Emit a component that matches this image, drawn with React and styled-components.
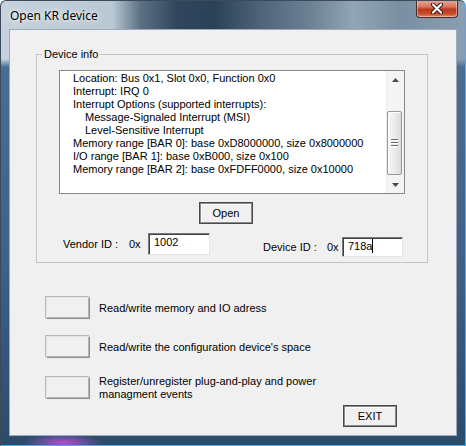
import React from "react";
import styled, { createGlobalStyle } from "styled-components";

const GlobalStyle = createGlobalStyle`
    html, body {
        margin: 0;
        padding: 0;
        background: #ffffff;
    }
    body {
        font-family: "Liberation Sans", Arial, sans-serif;
        font-size: 11px;
        color: #000;
    }
`;

const deviceLines = [
    { text: "Location: Bus 0x1, Slot 0x0, Function 0x0" },
    { text: "Interrupt: IRQ 0" },
    { text: "Interrupt Options (supported interrupts):" },
    { text: "Message-Signaled Interrupt (MSI)", indent: true },
    { text: "Level-Sensitive Interrupt", indent: true },
    { text: "Memory range [BAR 0]: base 0xD8000000, size 0x8000000" },
    { text: "I/O range [BAR 1]: base 0xB000, size 0x100" },
    { text: "Memory range [BAR 2]: base 0xFDFF0000, size 0x10000" },
];

const actions = [
    "Read/write memory and IO adress",
    "Read/write the configuration device's space",
    "Register/unregister plug-and-play and power\nmanagment events",
];

const App = () => {
    return (
        <>
            <GlobalStyle />
            <Window>
                <TitleBar>
                    <Title>Open KR device</Title>
                    <CloseButton>
                        <svg width="16" height="11" viewBox="0 0 16 11">
                            <path
                                d="M4 1.5 L12 9.5 M12 1.5 L4 9.5"
                                stroke="#3a1010"
                                strokeWidth="4"
                                strokeLinecap="round"
                            />
                            <path
                                d="M4 1.5 L12 9.5 M12 1.5 L4 9.5"
                                stroke="#ffffff"
                                strokeWidth="2.2"
                                strokeLinecap="round"
                            />
                        </svg>
                    </CloseButton>
                </TitleBar>
                <Client>
                    <GroupBox>
                        <Legend>Device info</Legend>
                        <ListBox>
                            <ListLines>
                                {deviceLines.map((line, i) => (
                                    <ListLine key={i} $indent={line.indent}>
                                        {line.text}
                                    </ListLine>
                                ))}
                            </ListLines>
                            <ScrollBar>
                                <ArrowBox>
                                    <svg width="7" height="4" viewBox="0 0 7 4">
                                        <path d="M3.5 0 L7 4 L0 4 Z" fill="#4a4a4a" />
                                    </svg>
                                </ArrowBox>
                                <Track>
                                    <Thumb>
                                        <Grip />
                                        <Grip />
                                        <Grip />
                                    </Thumb>
                                </Track>
                                <ArrowBox>
                                    <svg width="7" height="4" viewBox="0 0 7 4">
                                        <path d="M0 0 L7 0 L3.5 4 Z" fill="#4a4a4a" />
                                    </svg>
                                </ArrowBox>
                            </ScrollBar>
                        </ListBox>
                        <DefaultButton $left={140} $top={8}>Open</DefaultButton>
                        <IdRow>
                            <IdField>
                                <FieldLabel $width={66}>Vendor ID :</FieldLabel>
                                <FieldLabel $width={19}>0x</FieldLabel>
                                <EditBox $width={62} $height={22}>1002</EditBox>
                            </IdField>
                            <IdField $offset={4}>
                                <FieldLabel $width={64}>Device ID :</FieldLabel>
                                <FieldLabel $width={15}>0x</FieldLabel>
                                <EditBox $width={61} $height={20}>
                                    718a<Caret />
                                </EditBox>
                            </IdField>
                        </IdRow>
                    </GroupBox>
                    <ActionList>
                        {actions.map((label, i) => (
                            <ActionRow key={i}>
                                <PlainButton />
                                <ActionText>{label}</ActionText>
                            </ActionRow>
                        ))}
                    </ActionList>
                    <DefaultButton $left={333} $top={4}>EXIT</DefaultButton>
                </Client>
            </Window>
        </>
    );
};

const Window = styled.div`
    width: 466px;
    height: 446px;
    box-sizing: border-box;
    border: 1px solid #3b4b5c;
    border-right-color: #3ab8e8;
    border-bottom-color: #3ab8e8;
    border-radius: 6px 6px 0 0;
    display: flex;
    flex-direction: column;
    overflow: hidden;
    background:
        radial-gradient(ellipse 40px 10px at 62px 442px, rgba(170, 90, 220, 0.9), rgba(170, 90, 220, 0) 100%),
        linear-gradient(to bottom, rgba(70, 104, 140, 0) 0px, rgba(70, 104, 140, 0) 58px, #4a6d92 66px, #40628a 250px, #2c4c6c 440px),
        linear-gradient(90deg, #c6d2dd 0%, #bac8d4 24%, #5c7184 30%, #30465c 38%, #2a4157 46%, #4f6478 56%, #6a7f92 66%, #92a5b4 76%, #7990a2 86%, #8aa0b2 100%);
`;

const TitleBar = styled.div`
    height: 28px;
    flex: none;
    display: flex;
    align-items: flex-start;
    justify-content: space-between;
    padding-left: 9px;
`;

const Title = styled.div`
    margin-top: 7px;
    font-family: "Noto Sans", "Open Sans", sans-serif;
    font-size: 12px;
    line-height: 15px;
    color: #000;
    text-shadow: 0 0 6px rgba(255, 255, 255, 0.9), 0 0 3px rgba(255, 255, 255, 0.8);
`;

const CloseButton = styled.div`
    width: 42px;
    height: 18px;
    margin-top: -1px;
    margin-right: 7px;
    box-sizing: border-box;
    border: 1px solid #4a2a2a;
    border-top: none;
    border-radius: 0 0 4px 4px;
    background: linear-gradient(to bottom, #e8a89a 0%, #d6755f 40%, #b8381c 55%, #c84a2c 80%, #e08a60 100%);
    box-shadow: inset 0 0 0 1px rgba(255, 220, 210, 0.5);
    display: flex;
    align-items: center;
    justify-content: center;
`;

const Client = styled.div`
    flex: 1;
    margin: 0 8px 9px 8px;
    border: 1px solid #9aaabb;
    background: #f0f0f0;
    display: flex;
    flex-direction: column;
    align-items: flex-start;
`;

const GroupBox = styled.div`
    position: relative;
    box-sizing: border-box;
    width: 392px;
    height: 209px;
    margin: 24px 0 0 26px;
    padding: 15px 0 0 22px;
    border: 1px solid #c4c4c4;
    display: flex;
    flex-direction: column;
    align-items: flex-start;
`;

const Legend = styled.span`
    position: absolute;
    top: -8px;
    left: 5px;
    padding: 0 2px;
    background: #f0f0f0;
    font-size: 11px;
    line-height: 14px;
`;

const ListBox = styled.div`
    box-sizing: border-box;
    width: 346px;
    height: 124px;
    border: 1px solid #828790;
    background: #fff;
    display: flex;
`;

const ListLines = styled.div`
    flex: 1;
    padding: 1px 0 0 13px;
`;

const ListLine = styled.div`
    line-height: 13px;
    white-space: nowrap;
    padding-left: ${(p) => (p.$indent ? "12px" : "0")};
`;

const ScrollBar = styled.div`
    width: 17px;
    display: flex;
    flex-direction: column;
    background: #f4f4f4;
    border-left: 1px solid #ececec;
`;

const ArrowBox = styled.div`
    height: 17px;
    flex: none;
    display: flex;
    align-items: center;
    justify-content: center;
`;

const Track = styled.div`
    flex: 1;
    padding-top: 23px;
`;

const Thumb = styled.div`
    box-sizing: border-box;
    width: 15px;
    height: 64px;
    margin-left: 0;
    border: 1px solid #979797;
    border-radius: 2px;
    background: linear-gradient(90deg, #f6f6f6 0%, #ececec 50%, #dcdcdc 100%);
    box-shadow: inset 1px 1px 0 #ffffff;
    display: flex;
    flex-direction: column;
    align-items: center;
    justify-content: center;
    gap: 1px;
`;

const Grip = styled.div`
    width: 7px;
    height: 1px;
    background: #6a6a6a;
    border-bottom: 1px solid #ffffff;
`;

const DefaultButton = styled.div`
    box-sizing: border-box;
    width: 54px;
    height: 22px;
    margin-left: ${(p) => p.$left}px;
    margin-top: ${(p) => p.$top}px;
    border: 1px solid #4a4a4a;
    box-shadow: inset 0 0 0 1px #8a8a8a, inset 2px 2px 0 #ffffff;
    background: #f0f0f0;
    display: flex;
    align-items: center;
    justify-content: center;
    font-size: 11px;
`;

const IdRow = styled.div`
    display: flex;
    align-items: flex-start;
    gap: 53px;
    margin: 9px 0 0 4px;
`;

const IdField = styled.div`
    display: flex;
    align-items: center;
    margin-top: ${(p) => p.$offset || 0}px;
`;

const FieldLabel = styled.span`
    width: ${(p) => p.$width}px;
    white-space: nowrap;
    line-height: 13px;
`;

const EditBox = styled.div`
    box-sizing: border-box;
    width: ${(p) => p.$width}px;
    height: ${(p) => p.$height}px;
    padding: 2px 5px 0 5px;
    line-height: 13px;
    background: #fff;
    border-style: solid;
    border-width: 1px;
    border-color: #7a7a7a #e6e6e6 #e6e6e6 #7a7a7a;
    box-shadow: inset 1px 1px 0 #404040;
    display: flex;
    align-items: flex-start;
`;

const Caret = styled.span`
    display: inline-block;
    width: 1px;
    height: 14px;
    margin-top: -1px;
    background: #000;
`;

const ActionList = styled.div`
    display: flex;
    flex-direction: column;
    gap: 17px;
    margin: 34px 0 0 36px;
`;

const ActionRow = styled.div`
    display: flex;
    align-items: center;
    gap: 9px;
    min-height: 22px;
`;

const PlainButton = styled.div`
    box-sizing: border-box;
    width: 44px;
    height: 22px;
    flex: none;
    background: #f0f0f0;
    border-style: solid;
    border-width: 1px;
    border-color: #e4e4e4 #8e8e8e #8e8e8e #e4e4e4;
    box-shadow: inset -1px -1px 0 #b4b4b4, -1px -1px 0 #b8b8b8;
`;

const ActionText = styled.div`
    white-space: pre-line;
    line-height: 13px;
`;

export default App;
